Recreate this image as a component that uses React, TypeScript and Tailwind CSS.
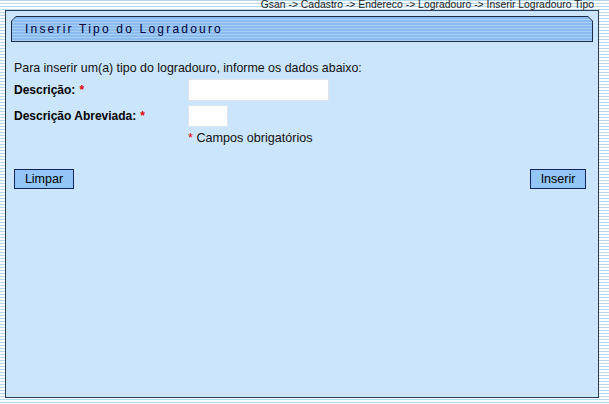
export default function App() {
  return (
    <div
      className="w-[609px] h-[404px] overflow-hidden bg-[repeating-linear-gradient(to_bottom,#b3d9f3_0px,#b3d9f3_1px,#ffffff_1px,#ffffff_3px)] text-black"
      style={{ fontFamily: '"Liberation Sans", Arial, sans-serif' }}
    >
      <div className="flex h-[10px] justify-end pr-[15px] text-[10.4px] leading-[10px] text-[#222]">
        Gsan -&gt; Cadastro -&gt; Endereco -&gt; Logradouro -&gt; Inserir Logradouro Tipo
      </div>
      <div className="ml-[5px] w-[594px] h-[388px] border border-[#2b3b55] bg-[#cbe5fd] px-[5px] pt-[5px]">
        <div className="relative h-[26px] bg-[#1d2b45] [clip-path:polygon(5px_0,calc(100%-5px)_0,100%_5px,100%_100%,0_100%,0_5px)]">
          <div className="absolute inset-[1px] flex items-center pl-[13px] bg-[repeating-linear-gradient(to_bottom,#8cbcef_0px,#8cbcef_2px,#a7cff6_2px,#a7cff6_3px)] [clip-path:polygon(4px_0,calc(100%-4px)_0,100%_4px,100%_100%,0_100%,0_4px)]">
            <span className="text-[12px] tracking-[2.2px] text-[#00003a]">Inserir Tipo do Logradouro</span>
          </div>
        </div>

        <div className="pl-[3px] pr-[7px]">
          <p className="mt-[19px] text-[12.4px] leading-[14px] text-[#111]">
            Para inserir um(a) tipo do logradouro, informe os dados abaixo:
          </p>

          <div className="mt-[4px] flex items-center">
            <label className="w-[174px] text-[12px] font-bold">
              Descrição:<span className="ml-[4px] text-[#e00000]">*</span>
            </label>
            <input className="h-[22px] w-[141px] border border-[#dde4ec] bg-white px-1 text-[12px] outline-none" />
          </div>

          <div className="mt-[4px] flex items-center">
            <label className="w-[174px] text-[12px] font-bold">
              Descrição Abreviada:<span className="ml-[4px] text-[#e00000]">*</span>
            </label>
            <input className="h-[22px] w-[40px] border border-[#dde4ec] bg-white px-1 text-[12px] outline-none" />
          </div>

          <p className="mt-[4px] pl-[174px] text-[12.6px] leading-[14px] text-[#111]">
            <span className="text-[#e00000]">*</span> Campos obrigatórios
          </p>

          <div className="mt-[24px] flex justify-between">
            <button className="h-[20px] w-[60px] border border-[#15235e] bg-[#93c5f7] text-[12.5px] leading-none">
              Limpar
            </button>
            <button className="h-[20px] w-[56px] border border-[#15235e] bg-[#93c5f7] text-[12.5px] leading-none">
              Inserir
            </button>
          </div>
        </div>
      </div>
    </div>
  );
}
